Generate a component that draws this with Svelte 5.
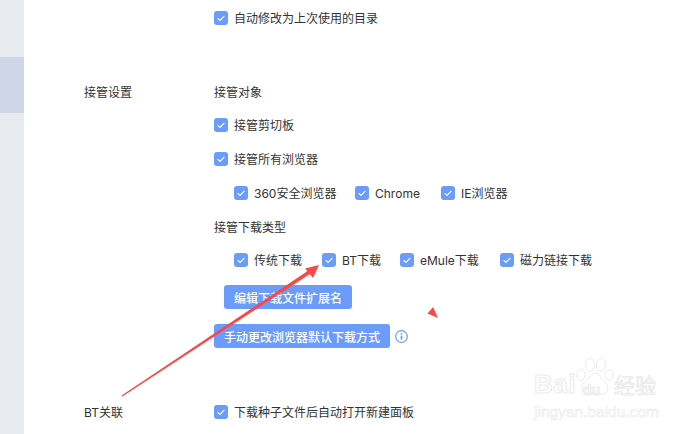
<script>
	const browsers = [
		{ label: '360安全浏览器', width: 121 },
		{ label: 'Chrome', width: 86 },
		{ label: 'IE浏览器' }
	];
	const types = [
		{ label: '传统下载', width: 88 },
		{ label: 'BT下载', width: 78 },
		{ label: 'eMule下载', width: 100 },
		{ label: '磁力链接下载' }
	];
</script>

{#snippet check(label, width)}
	<label class="check" style:width={width ? width + 'px' : null}>
		<span class="box">
			<svg viewBox="0 0 14 14" width="14" height="14">
				<path d="M3.6 7.2 6 9.5l4.4-4.6" fill="none" stroke="#fff" stroke-width="1.1" />
			</svg>
		</span>
		<span class="text">{label}</span>
	</label>
{/snippet}

<div class="page">
	<aside class="sidebar">
		<div class="active"></div>
	</aside>

	<main class="content">
		<section class="first">
			{@render check('自动修改为上次使用的目录')}
		</section>

		<section class="setting">
			<div class="name">接管设置</div>
			<div class="options">
				<div class="title">接管对象</div>
				<div class="row one">{@render check('接管剪切板')}</div>
				<div class="row two">{@render check('接管所有浏览器')}</div>
				<div class="row three nested">
					{#each browsers as b}
						{@render check(b.label, b.width)}
					{/each}
				</div>
				<div class="title types">接管下载类型</div>
				<div class="row four nested">
					{#each types as t}
						{@render check(t.label, t.width)}
					{/each}
				</div>
				<button class="btn edit">编辑下载文件扩展名</button>
				<div class="manual">
					<button class="btn">手动更改浏览器默认下载方式</button>
					<svg class="info" viewBox="0 0 13 13" width="13" height="13">
						<circle cx="6.5" cy="6.5" r="5.8" fill="none" stroke="#6b9cfb" stroke-width="1.2" />
						<path d="M6.5 5.6v4.2M6.5 3v1.4" stroke="#6b9cfb" stroke-width="1.6" fill="none" />
					</svg>
				</div>
			</div>
		</section>

		<section class="setting bt">
			<div class="name">BT关联</div>
			<div class="options">
				{@render check('下载种子文件后自动打开新建面板')}
			</div>
		</section>
	</main>

	<svg class="marks" viewBox="0 0 696 434" width="696" height="434">
		<path d="M121.6 395.6 311 268.8 313 272 122.4 396.4Z" fill="#f94848" />
		<path d="M319 265 305 268.5 313 278Z" fill="#f94848" />
		<path d="M427.5 313.5 433 307 438 318Z" fill="#f94848" />
	</svg>

	<div class="watermark">
		<svg class="paw" viewBox="0 0 38 40" width="38" height="40">
			<g fill="#fff" stroke="#ebebeb">
				<ellipse cx="5" cy="17" rx="4" ry="5.5" />
				<ellipse cx="14" cy="7" rx="4.5" ry="6.5" />
				<ellipse cx="25" cy="7" rx="4.5" ry="6.5" />
				<ellipse cx="33" cy="17" rx="4" ry="5.5" />
				<path d="M19 15c5 0 6 6 11 10 4 4 1 12-5 11-4-.6-8-.6-12 0-6 1-9-7-5-11 5-4 6-10 11-10Z" />
			</g>
		</svg>
		<div class="wm-main">
			<span class="wm-bai">Bai</span><span class="wm-du">du</span><span class="wm-cn">经验</span>
		</div>
		<div class="wm-url">jingyan.baidu.com</div>
	</div>
</div>

<style>
	:global(body) {
		margin: 0;
		background: #fff;
	}

	.page {
		position: relative;
		display: flex;
		width: 696px;
		height: 434px;
		overflow: hidden;
		font-family: Inter, "Noto Sans CJK SC", "Noto Sans", sans-serif;
		font-size: 12px;
		color: #333;
		background: #fff;
	}

	.sidebar {
		flex: 0 0 24px;
		padding-top: 57px;
		box-sizing: border-box;
		background: #e9ebf1;
	}

	.active {
		height: 56px;
		background: #cfd6e8;
	}

	.content {
		flex: 1;
		padding-left: 60px;
	}

	.first {
		height: 24px;
		margin-top: 6px;
		padding-left: 130px;
		display: flex;
		align-items: center;
	}

	.setting {
		display: flex;
		margin-top: 50px;
	}

	.name {
		flex: 0 0 130px;
		height: 24px;
		line-height: 25px;
	}

	.options {
		flex: 1;
	}

	.title {
		height: 24px;
		line-height: 25px;
	}

	.title.types {
		margin-top: 10px;
	}

	.row {
		display: flex;
		align-items: center;
		height: 24px;
		margin-top: 9px;
	}

	.row.two,
	.row.three {
		margin-top: 10px;
	}

	.nested {
		padding-left: 20px;
	}

	.check {
		display: flex;
		align-items: center;
		gap: 6px;
		line-height: 20px;
		white-space: nowrap;
	}

	.text {
		padding-top: 2px;
	}

	.box {
		flex: none;
		width: 14px;
		height: 14px;
		border-radius: 3px;
		background: #6b9cfb;
	}

	.box svg {
		display: block;
	}

	.btn {
		display: block;
		height: 24px;
		padding: 0 10px;
		border: 0;
		border-radius: 3px;
		background: #6b9cfb;
		color: #fff;
		font: inherit;
		font-weight: 500;
	}

	.btn.edit {
		margin: 13px 0 0 10px;
	}

	.manual {
		display: flex;
		align-items: center;
		gap: 5px;
		margin-top: 15px;
	}

	.info {
		display: block;
	}

	.bt {
		margin-top: 52px;
	}

	.bt .options {
		display: flex;
		align-items: center;
		height: 24px;
	}

	.marks {
		position: absolute;
		left: 0;
		top: 0;
		pointer-events: none;
	}

	.watermark {
		position: absolute;
		left: 534px;
		top: 358px;
		width: 130px;
		height: 70px;
		pointer-events: none;
		color: transparent;
		-webkit-text-stroke: 1px #ebebeb;
		font-family: "Liberation Sans", sans-serif;
	}

	.paw {
		position: absolute;
		left: 42px;
		top: 0;
	}

	.wm-main {
		position: absolute;
		left: 0;
		top: 11px;
		line-height: 30px;
		white-space: nowrap;
	}

	.wm-bai {
		font-size: 26px;
		font-weight: 700;
		letter-spacing: 0.5px;
	}

	.wm-du {
		position: relative;
		top: 2px;
		margin-left: 7px;
		font-size: 14px;
		font-weight: 700;
	}

	.wm-cn {
		position: absolute;
		left: 80px;
		top: 0;
		font-size: 21px;
		font-family: "Noto Sans CJK SC", sans-serif;
	}

	.wm-url {
		position: absolute;
		left: 0;
		top: 45px;
		font-size: 15.5px;
		-webkit-text-stroke: 0.6px #ebebeb;
		white-space: nowrap;
	}
</style>
